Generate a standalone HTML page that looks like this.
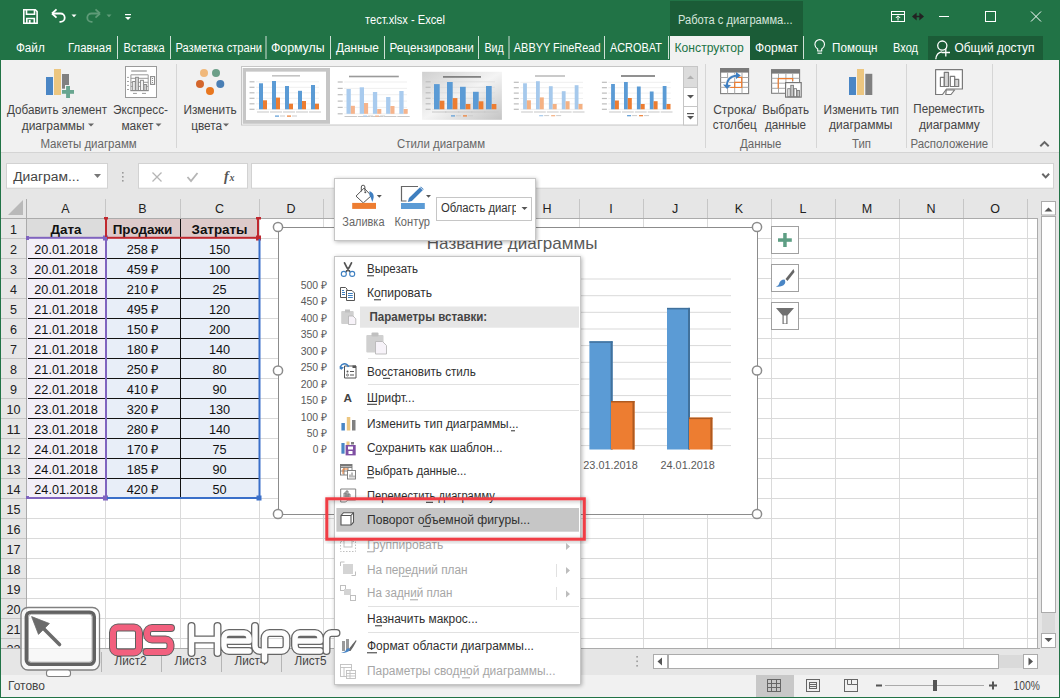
<!DOCTYPE html><html><head><meta charset="utf-8"><style>html,body{margin:0;padding:0;width:1060px;height:698px;overflow:hidden;background:#217346}svg{display:block;font-family:"Liberation Sans",sans-serif}</style></head><body>
<svg width="1060" height="698" viewBox="0 0 1060 698">
<rect x="0" y="0" width="1060" height="698" fill="#217346" />
<rect x="670" y="1" width="133" height="59" fill="#1b5c37" />
<rect x="928" y="36" width="115" height="24" fill="#1b5c37" />
<g fill="none" stroke="#fff" stroke-width="1.6"><path d="M23.8 9.8 h11.5 l1.8 1.8 v11.6 h-13.3 z"/><path d="M26.5 10 v4.2 h8 v-4.2"/><path d="M26.8 23 v-4.5 h7.5 v4.5"/></g>
<rect x="28.8" y="20" width="1.8" height="3" fill="#fff" />
<path d="M53 13.5 h7.5 a4.2 4.2 0 0 1 0 8.4 h-1" fill="none" stroke="#fff" stroke-width="1.8"/><path d="M52 13.5 l4.5 -4.2 M52 13.5 l4.5 4.2" stroke="#fff" stroke-width="1.8" fill="none"/>
<path d="M71.5 14.5 h5 l-2.5 2.8 z" fill="#fff"/>
<path d="M99 13.5 h-7.5 a4.2 4.2 0 0 0 0 8.4 h1" fill="none" stroke="#5f9b78" stroke-width="1.8"/><path d="M100 13.5 l-4.5 -4.2 M100 13.5 l-4.5 4.2" stroke="#5f9b78" stroke-width="1.8" fill="none"/>
<path d="M106.5 14.5 h5 l-2.5 2.8 z" fill="#5f9b78"/>
<rect x="125" y="14" width="6" height="1.2" fill="#fff" />
<path d="M125 17 h6 l-3 3 z" fill="#fff"/>
<text x="365" y="24" font-size="12" fill="#fff" textLength="80" lengthAdjust="spacingAndGlyphs" >тест.xlsx - Excel</text>
<text x="678" y="24" font-size="12" fill="#d6e6dc" textLength="114.5" lengthAdjust="spacingAndGlyphs" >Работа с диаграмма...</text>
<g fill="none" stroke="#fff" stroke-width="1"><rect x="891.5" y="11.5" width="13" height="10"/><line x1="891.5" y1="14.5" x2="904.5" y2="14.5"/><path d="M898 20.5 v-4.5 M895.8 18 l2.2 -2.2 l2.2 2.2"/><line x1="939" y1="16.5" x2="949" y2="16.5"/><rect x="985.5" y="11.5" width="10" height="10"/><path d="M1031 11.5 l10 10 M1041 11.5 l-10 10"/></g>
<path d="M913 16.5 h10 M913 16.5 l3 -2.5 v5 z M923 16.5 l-3 -2.5 v5 z" stroke="#222" stroke-width="1.3" fill="#222"/>
<text x="16" y="52.3" font-size="12" fill="#fff" textLength="28.7" lengthAdjust="spacingAndGlyphs" >Файл</text>
<text x="68" y="52.3" font-size="12" fill="#fff" textLength="43.3" lengthAdjust="spacingAndGlyphs" >Главная</text>
<text x="123.6" y="52.3" font-size="12" fill="#fff" textLength="41.1" lengthAdjust="spacingAndGlyphs" >Вставка</text>
<text x="175.5" y="52.3" font-size="12" fill="#fff" textLength="86.5" lengthAdjust="spacingAndGlyphs" >Разметка страни</text>
<text x="271" y="52.3" font-size="12" fill="#fff" textLength="53.5" lengthAdjust="spacingAndGlyphs" >Формулы</text>
<text x="336" y="52.3" font-size="12" fill="#fff" textLength="42.8" lengthAdjust="spacingAndGlyphs" >Данные</text>
<text x="389.5" y="52.3" font-size="12" fill="#fff" textLength="84.3" lengthAdjust="spacingAndGlyphs" >Рецензировани</text>
<text x="484.5" y="52.3" font-size="12" fill="#fff" textLength="19.3" lengthAdjust="spacingAndGlyphs" >Вид</text>
<text x="513.8" y="52.3" font-size="12" fill="#fff" textLength="86.7" lengthAdjust="spacingAndGlyphs" >ABBYY FineRead</text>
<text x="610" y="52.3" font-size="12" fill="#fff" textLength="51.8" lengthAdjust="spacingAndGlyphs" >ACROBAT</text>
<line x1="117.5" y1="36" x2="117.5" y2="59" stroke="#cfe0d5" stroke-width="1" />
<line x1="170.5" y1="36" x2="170.5" y2="59" stroke="#cfe0d5" stroke-width="1" />
<line x1="266" y1="36" x2="266" y2="59" stroke="#cfe0d5" stroke-width="1" />
<line x1="330.5" y1="36" x2="330.5" y2="59" stroke="#cfe0d5" stroke-width="1" />
<line x1="384.5" y1="36" x2="384.5" y2="59" stroke="#cfe0d5" stroke-width="1" />
<line x1="478.5" y1="36" x2="478.5" y2="59" stroke="#cfe0d5" stroke-width="1" />
<line x1="509" y1="36" x2="509" y2="59" stroke="#cfe0d5" stroke-width="1" />
<line x1="604.5" y1="36" x2="604.5" y2="59" stroke="#cfe0d5" stroke-width="1" />
<line x1="668.5" y1="36" x2="668.5" y2="59" stroke="#cfe0d5" stroke-width="1" />
<line x1="803.5" y1="36" x2="803.5" y2="59" stroke="#cfe0d5" stroke-width="1" />
<rect x="670" y="36" width="80" height="24" fill="#f1f1f1" />
<text x="674.5" y="52" font-size="12" fill="#217346" textLength="69.3" lengthAdjust="spacingAndGlyphs" >Конструктор</text>
<text x="755" y="52" font-size="12" fill="#fff" textLength="43" lengthAdjust="spacingAndGlyphs" >Формат</text>
<g fill="none" stroke="#fff" stroke-width="1.1"><path d="M817.7 51 v-2 c-1.9-1.3-2.8-2.9-2.8-4.6 a4.8 4.8 0 0 1 9.6 0 c0 1.7-0.9 3.3-2.8 4.6 v2 z"/><line x1="817.5" y1="53.2" x2="821.9" y2="53.2"/></g>
<text x="832" y="52" font-size="12" fill="#fff" textLength="45.5" lengthAdjust="spacingAndGlyphs" >Помощн</text>
<text x="893" y="52" font-size="12" fill="#fff" textLength="25" lengthAdjust="spacingAndGlyphs" >Вход</text>
<g fill="none" stroke="#fff" stroke-width="1.3"><circle cx="942.3" cy="45.6" r="4.6"/><path d="M935.8 59.2 c0.4-4.3 2.6-7 6.2-7.4"/><path d="M941.6 52.5 h8.4 M945.8 48.3 v8.3"/></g>
<text x="954.5" y="52" font-size="12" fill="#fff" textLength="80" lengthAdjust="spacingAndGlyphs" >Общий доступ</text>
<rect x="1" y="60" width="1058" height="92" fill="#f1f1f1" />
<line x1="1" y1="152.5" x2="1059" y2="152.5" stroke="#d4d4d4" stroke-width="1" />
<line x1="176.5" y1="64" x2="176.5" y2="148" stroke="#d6d6d6" stroke-width="1" />
<line x1="705.5" y1="64" x2="705.5" y2="148" stroke="#d6d6d6" stroke-width="1" />
<line x1="816.5" y1="64" x2="816.5" y2="148" stroke="#d6d6d6" stroke-width="1" />
<line x1="906.5" y1="64" x2="906.5" y2="148" stroke="#d6d6d6" stroke-width="1" />
<line x1="992.5" y1="64" x2="992.5" y2="148" stroke="#d6d6d6" stroke-width="1" />
<rect x="46" y="77" width="7" height="18" fill="#4a86c5" />
<rect x="54" y="69" width="7" height="26" fill="#ecc680" />
<rect x="62" y="74" width="7" height="14.7" fill="#808080" />
<rect x="65" y="85" width="6.5" height="5" fill="#f1f1f1" />
<rect x="66.1" y="86" width="3.9" height="12" fill="#69a690" />
<rect x="62" y="90" width="12" height="3.8" fill="#69a690" />
<text x="7" y="113.5" font-size="12" fill="#444" textLength="100" lengthAdjust="spacingAndGlyphs" >Добавить элемент</text>
<text x="21.7" y="129.5" font-size="12" fill="#444" textLength="63" lengthAdjust="spacingAndGlyphs" >диаграммы</text>
<path d="M88 123.5 h6 l-3 3 z" fill="#666"/>
<rect x="125.5" y="66.5" width="31" height="31" fill="#fff" stroke="#9a9a9a" stroke-width="1" />
<g stroke="#8a8a8a" fill="none" stroke-width="1"><rect x="131.2" y="70.2" width="15.6" height="1.6" fill="#b0b0b0" stroke="none"/><path d="M130.9 90.5 v-15.7 h17.3 v15.7 M130.9 78.3 h17.3 M130.9 82.3 h17.3 M130.9 86.4 h17.3" stroke="#9a9a9a"/><path d="M127 77.4 h2 M127 81.5 h2 M127 85.4 h2 M127 89.5 h2" stroke="#9a9a9a" stroke-width="0.9"/><rect x="132.7" y="81.5" width="2.5" height="9" fill="#fff"/><rect x="135.6" y="77.3" width="2.8" height="13.2" fill="#d8d8d8"/><rect x="140.6" y="80.3" width="2.8" height="10.2" fill="#fff"/><rect x="143.9" y="84.5" width="2.5" height="6" fill="#d8d8d8"/><line x1="130.4" y1="90.6" x2="148.7" y2="90.6" stroke-width="1.2"/><rect x="150.6" y="76.6" width="4" height="7.8" stroke-width="1.1"/><path d="M133 93.4 h3.9 M142 93.4 h4" stroke="#9a9a9a"/></g><circle cx="152.5" cy="78.5" r="0.6" fill="#777"/><circle cx="152.5" cy="80.5" r="0.6" fill="#777"/><circle cx="152.5" cy="82.5" r="0.6" fill="#777"/>
<text x="113" y="113.5" font-size="12" fill="#444" textLength="55" lengthAdjust="spacingAndGlyphs" >Экспресс-</text>
<text x="121.4" y="129.5" font-size="12" fill="#444" textLength="32" lengthAdjust="spacingAndGlyphs" >макет</text>
<path d="M155.5 123.5 h6 l-3 3 z" fill="#666"/>
<text x="40.4" y="148.3" font-size="12" fill="#666" textLength="96.3" lengthAdjust="spacingAndGlyphs" >Макеты диаграмм</text>
<circle cx="204" cy="73" r="4" fill="#f0b87a"/>
<circle cx="216" cy="73" r="4" fill="#6c9f88"/>
<circle cx="200" cy="84" r="4" fill="#d4662c"/>
<circle cx="220.3" cy="84" r="4" fill="#4a7fb5"/>
<circle cx="210" cy="91" r="4" fill="#e8771f"/>
<text x="183.4" y="113.5" font-size="12" fill="#444" textLength="53.4" lengthAdjust="spacingAndGlyphs" >Изменить</text>
<text x="191.2" y="129.5" font-size="12" fill="#444" textLength="31" lengthAdjust="spacingAndGlyphs" >цвета</text>
<path d="M223 123.5 h6 l-3 3 z" fill="#666"/>
<rect x="241.5" y="66.5" width="456" height="58.5" fill="#fff" stroke="#c6c6c6" stroke-width="1" />
<rect x="242.7" y="68" width="87.3" height="55.8" fill="#c6c6c6" />
<rect x="246" y="71.8" width="80" height="48.2" fill="#fff" />
<rect x="246" y="71.8" width="80" height="48.2" fill="#fff" />
<line x1="256" y1="109.3" x2="319" y2="109.3" stroke="#e4e4e4" stroke-width="0.6" />
<line x1="256" y1="103.8" x2="319" y2="103.8" stroke="#e4e4e4" stroke-width="0.6" />
<line x1="256" y1="98.3" x2="319" y2="98.3" stroke="#e4e4e4" stroke-width="0.6" />
<line x1="256" y1="92.8" x2="319" y2="92.8" stroke="#e4e4e4" stroke-width="0.6" />
<line x1="256" y1="87.3" x2="319" y2="87.3" stroke="#e4e4e4" stroke-width="0.6" />
<line x1="256" y1="81.8" x2="319" y2="81.8" stroke="#e4e4e4" stroke-width="0.6" />
<rect x="249.5" y="108.7" width="5" height="1.2" fill="#bdbdbd" />
<rect x="249.5" y="103.2" width="5" height="1.2" fill="#bdbdbd" />
<rect x="249.5" y="97.7" width="5" height="1.2" fill="#bdbdbd" />
<rect x="249.5" y="92.2" width="5" height="1.2" fill="#bdbdbd" />
<rect x="249.5" y="86.7" width="5" height="1.2" fill="#bdbdbd" />
<rect x="249.5" y="81.2" width="5" height="1.2" fill="#bdbdbd" />
<rect x="259" y="83.3" width="4" height="26.0" fill="#5b9bd5" />
<rect x="263" y="100.3" width="4" height="9.0" fill="#ed7d31" />
<rect x="257" y="111.5" width="12" height="1" fill="#c8c8c8" />
<rect x="272" y="81" width="4" height="28.3" fill="#5b9bd5" />
<rect x="276" y="97.6" width="4" height="11.7" fill="#ed7d31" />
<rect x="270" y="111.5" width="12" height="1" fill="#c8c8c8" />
<rect x="285" y="86" width="4" height="23.3" fill="#5b9bd5" />
<rect x="289" y="103.7" width="4" height="5.6" fill="#ed7d31" />
<rect x="283" y="111.5" width="12" height="1" fill="#c8c8c8" />
<rect x="298" y="90.8" width="4" height="18.5" fill="#5b9bd5" />
<rect x="302" y="101" width="4" height="8.3" fill="#ed7d31" />
<rect x="296" y="111.5" width="12" height="1" fill="#c8c8c8" />
<rect x="311" y="85" width="4" height="24.3" fill="#5b9bd5" />
<rect x="315" y="103.7" width="4" height="5.6" fill="#ed7d31" />
<rect x="309" y="111.5" width="12" height="1" fill="#c8c8c8" />
<rect x="272" y="75.0" width="28" height="1.6" fill="#c4c4c4" />
<rect x="275.0" y="115.5" width="4" height="1.2" fill="#5b9bd5" />
<rect x="280.0" y="115.5" width="5" height="1" fill="#ccc" />
<rect x="287.0" y="115.5" width="4" height="1.2" fill="#ed7d31" />
<rect x="292.0" y="115.5" width="5" height="1" fill="#ccc" />
<rect x="334.2" y="72" width="79.8" height="48" fill="#fff" />
<line x1="344.2" y1="113.8" x2="407.0" y2="113.8" stroke="#e4e4e4" stroke-width="0.6" />
<line x1="344.2" y1="107.4" x2="407.0" y2="107.4" stroke="#e4e4e4" stroke-width="0.6" />
<line x1="344.2" y1="101.1" x2="407.0" y2="101.1" stroke="#e4e4e4" stroke-width="0.6" />
<line x1="344.2" y1="94.7" x2="407.0" y2="94.7" stroke="#e4e4e4" stroke-width="0.6" />
<line x1="344.2" y1="88.4" x2="407.0" y2="88.4" stroke="#e4e4e4" stroke-width="0.6" />
<line x1="344.2" y1="82.0" x2="407.0" y2="82.0" stroke="#e4e4e4" stroke-width="0.6" />
<rect x="337.7" y="113.2" width="5" height="1.2" fill="#bdbdbd" />
<rect x="337.7" y="106.80000000000001" width="5" height="1.2" fill="#bdbdbd" />
<rect x="337.7" y="100.5" width="5" height="1.2" fill="#bdbdbd" />
<rect x="337.7" y="94.10000000000001" width="5" height="1.2" fill="#bdbdbd" />
<rect x="337.7" y="87.80000000000001" width="5" height="1.2" fill="#bdbdbd" />
<rect x="337.7" y="81.4" width="5" height="1.2" fill="#bdbdbd" />
<rect x="346.5" y="89" width="4.3" height="24.8" fill="#a9cbee" />
<rect x="350.8" y="105.8" width="4.1" height="8.0" fill="#f5b48c" />
<rect x="344.5" y="116.0" width="12.399999999999999" height="1" fill="#c8c8c8" />
<rect x="359.7" y="87.3" width="4.3" height="26.5" fill="#a9cbee" />
<rect x="364.0" y="103" width="4.1" height="10.8" fill="#f5b48c" />
<rect x="357.7" y="116.0" width="12.399999999999999" height="1" fill="#c8c8c8" />
<rect x="372.9" y="92" width="4.3" height="21.8" fill="#a9cbee" />
<rect x="377.2" y="109" width="4.1" height="4.8" fill="#f5b48c" />
<rect x="370.9" y="116.0" width="12.399999999999999" height="1" fill="#c8c8c8" />
<rect x="386.1" y="97" width="4.3" height="16.8" fill="#a9cbee" />
<rect x="390.4" y="106" width="4.1" height="7.8" fill="#f5b48c" />
<rect x="384.1" y="116.0" width="12.399999999999999" height="1" fill="#c8c8c8" />
<rect x="399.3" y="91" width="4.3" height="22.8" fill="#a9cbee" />
<rect x="403.6" y="109" width="4.1" height="4.8" fill="#f5b48c" />
<rect x="397.3" y="116.0" width="12.399999999999999" height="1" fill="#c8c8c8" />
<rect x="349" y="75.7" width="49.80000000000001" height="1.6" fill="#9a9a9a" />
<rect x="363.09999999999997" y="115.5" width="4" height="1.2" fill="#a9cbee" />
<rect x="368.09999999999997" y="115.5" width="5" height="1" fill="#ccc" />
<rect x="375.09999999999997" y="115.5" width="4" height="1.2" fill="#f5b48c" />
<rect x="380.09999999999997" y="115.5" width="5" height="1" fill="#ccc" />
<defs><linearGradient id="g3" x1="0" y1="0" x2="1" y2="1"><stop offset="0" stop-color="#d0d0d0"/><stop offset="0.5" stop-color="#f4f4f4"/><stop offset="1" stop-color="#c4c4c4"/></linearGradient></defs>
<rect x="422.1" y="71.8" width="79.8" height="48" fill="url(#g3)" />
<line x1="432.1" y1="109.3" x2="494.90000000000003" y2="109.3" stroke="#d6d6d6" stroke-width="0.6" />
<line x1="432.1" y1="103.8" x2="494.90000000000003" y2="103.8" stroke="#d6d6d6" stroke-width="0.6" />
<line x1="432.1" y1="98.3" x2="494.90000000000003" y2="98.3" stroke="#d6d6d6" stroke-width="0.6" />
<line x1="432.1" y1="92.8" x2="494.90000000000003" y2="92.8" stroke="#d6d6d6" stroke-width="0.6" />
<line x1="432.1" y1="87.3" x2="494.90000000000003" y2="87.3" stroke="#d6d6d6" stroke-width="0.6" />
<line x1="432.1" y1="81.8" x2="494.90000000000003" y2="81.8" stroke="#d6d6d6" stroke-width="0.6" />
<rect x="425.6" y="108.7" width="5" height="1.2" fill="#bdbdbd" />
<rect x="425.6" y="103.2" width="5" height="1.2" fill="#bdbdbd" />
<rect x="425.6" y="97.7" width="5" height="1.2" fill="#bdbdbd" />
<rect x="425.6" y="92.2" width="5" height="1.2" fill="#bdbdbd" />
<rect x="425.6" y="86.7" width="5" height="1.2" fill="#bdbdbd" />
<rect x="425.6" y="81.2" width="5" height="1.2" fill="#bdbdbd" />
<rect x="434" y="84.1" width="5.7" height="25.2" fill="#5b9bd5" />
<rect x="439.7" y="100.7" width="4.7" height="8.6" fill="#ed7d31" />
<rect x="432" y="111.5" width="14.4" height="1" fill="#c8c8c8" />
<rect x="447" y="82" width="5.7" height="27.3" fill="#5b9bd5" />
<rect x="452.7" y="98.1" width="4.7" height="11.2" fill="#ed7d31" />
<rect x="445" y="111.5" width="14.4" height="1" fill="#c8c8c8" />
<rect x="460" y="86.8" width="5.7" height="22.5" fill="#5b9bd5" />
<rect x="465.7" y="104" width="4.7" height="5.3" fill="#ed7d31" />
<rect x="458" y="111.5" width="14.4" height="1" fill="#c8c8c8" />
<rect x="473" y="91.8" width="5.7" height="17.5" fill="#5b9bd5" />
<rect x="478.7" y="101.3" width="4.7" height="8.0" fill="#ed7d31" />
<rect x="471" y="111.5" width="14.4" height="1" fill="#c8c8c8" />
<rect x="486" y="86" width="5.7" height="23.3" fill="#5b9bd5" />
<rect x="491.7" y="104" width="4.7" height="5.3" fill="#ed7d31" />
<rect x="484" y="111.5" width="14.4" height="1" fill="#c8c8c8" />
<rect x="443" y="76.10000000000001" width="38" height="1.6" fill="#777" />
<rect x="451.0" y="115.3" width="4" height="1.2" fill="#5b9bd5" />
<rect x="456.0" y="115.3" width="5" height="1" fill="#ccc" />
<rect x="463.0" y="115.3" width="4" height="1.2" fill="#ed7d31" />
<rect x="468.0" y="115.3" width="5" height="1" fill="#ccc" />
<rect x="510.3" y="72.3" width="79.7" height="47.3" fill="#fff" />
<line x1="520.3" y1="109.3" x2="583.0" y2="109.3" stroke="#e4e4e4" stroke-width="0.6" />
<line x1="520.3" y1="103.9" x2="583.0" y2="103.9" stroke="#e4e4e4" stroke-width="0.6" />
<line x1="520.3" y1="98.5" x2="583.0" y2="98.5" stroke="#e4e4e4" stroke-width="0.6" />
<line x1="520.3" y1="93.1" x2="583.0" y2="93.1" stroke="#e4e4e4" stroke-width="0.6" />
<line x1="520.3" y1="87.7" x2="583.0" y2="87.7" stroke="#e4e4e4" stroke-width="0.6" />
<line x1="520.3" y1="82.3" x2="583.0" y2="82.3" stroke="#e4e4e4" stroke-width="0.6" />
<rect x="513.8" y="108.7" width="5" height="1.2" fill="#bdbdbd" />
<rect x="513.8" y="103.30000000000001" width="5" height="1.2" fill="#bdbdbd" />
<rect x="513.8" y="97.9" width="5" height="1.2" fill="#bdbdbd" />
<rect x="513.8" y="92.5" width="5" height="1.2" fill="#bdbdbd" />
<rect x="513.8" y="87.10000000000001" width="5" height="1.2" fill="#bdbdbd" />
<rect x="513.8" y="81.7" width="5" height="1.2" fill="#bdbdbd" />
<rect x="523.1" y="83.3" width="3.8" height="26.0" fill="#a6c9ec" />
<rect x="526.9" y="100.3" width="4" height="9.0" fill="#f4b183" />
<rect x="521.1" y="111.5" width="11.8" height="1" fill="#c8c8c8" />
<rect x="536.0" y="81.2" width="3.8" height="28.1" fill="#a6c9ec" />
<rect x="539.8" y="97.4" width="4" height="11.9" fill="#f4b183" />
<rect x="534.0" y="111.5" width="11.8" height="1" fill="#c8c8c8" />
<rect x="548.9" y="86.2" width="3.8" height="23.1" fill="#a6c9ec" />
<rect x="552.7" y="104" width="4" height="5.3" fill="#f4b183" />
<rect x="546.9" y="111.5" width="11.8" height="1" fill="#c8c8c8" />
<rect x="561.8" y="91.2" width="3.8" height="18.1" fill="#a6c9ec" />
<rect x="565.6" y="101.2" width="4" height="8.1" fill="#f4b183" />
<rect x="559.8" y="111.5" width="11.8" height="1" fill="#c8c8c8" />
<rect x="574.7" y="85.2" width="3.8" height="24.1" fill="#a6c9ec" />
<rect x="578.5" y="104" width="4" height="5.3" fill="#f4b183" />
<rect x="572.7" y="111.5" width="11.8" height="1" fill="#c8c8c8" />
<rect x="535" y="75.2" width="30" height="1.6" fill="#bdbdbd" />
<rect x="539.15" y="115.1" width="4" height="1.2" fill="#a6c9ec" />
<rect x="544.15" y="115.1" width="5" height="1" fill="#ccc" />
<rect x="551.15" y="115.1" width="4" height="1.2" fill="#f4b183" />
<rect x="556.15" y="115.1" width="5" height="1" fill="#ccc" />
<rect x="598.4" y="72.3" width="79.3" height="47.3" fill="#fff" />
<line x1="608.4" y1="109.3" x2="670.6999999999999" y2="109.3" stroke="#e4e4e4" stroke-width="0.6" />
<line x1="608.4" y1="103.9" x2="670.6999999999999" y2="103.9" stroke="#e4e4e4" stroke-width="0.6" />
<line x1="608.4" y1="98.5" x2="670.6999999999999" y2="98.5" stroke="#e4e4e4" stroke-width="0.6" />
<line x1="608.4" y1="93.1" x2="670.6999999999999" y2="93.1" stroke="#e4e4e4" stroke-width="0.6" />
<line x1="608.4" y1="87.7" x2="670.6999999999999" y2="87.7" stroke="#e4e4e4" stroke-width="0.6" />
<line x1="608.4" y1="82.3" x2="670.6999999999999" y2="82.3" stroke="#e4e4e4" stroke-width="0.6" />
<rect x="601.9" y="108.7" width="5" height="1.2" fill="#bdbdbd" />
<rect x="601.9" y="103.30000000000001" width="5" height="1.2" fill="#bdbdbd" />
<rect x="601.9" y="97.9" width="5" height="1.2" fill="#bdbdbd" />
<rect x="601.9" y="92.5" width="5" height="1.2" fill="#bdbdbd" />
<rect x="601.9" y="87.10000000000001" width="5" height="1.2" fill="#bdbdbd" />
<rect x="601.9" y="81.7" width="5" height="1.2" fill="#bdbdbd" />
<rect x="611.1" y="84" width="3.8" height="25.3" fill="#5b9bd5" />
<rect x="614.9" y="100.5" width="4" height="8.8" fill="#ed7d31" />
<rect x="609.1" y="111.5" width="11.8" height="1" fill="#c8c8c8" />
<rect x="624.0" y="82" width="3.8" height="27.3" fill="#5b9bd5" />
<rect x="627.8" y="98" width="4" height="11.3" fill="#ed7d31" />
<rect x="622.0" y="111.5" width="11.8" height="1" fill="#c8c8c8" />
<rect x="636.9" y="86.5" width="3.8" height="22.8" fill="#5b9bd5" />
<rect x="640.7" y="104" width="4" height="5.3" fill="#ed7d31" />
<rect x="634.9" y="111.5" width="11.8" height="1" fill="#c8c8c8" />
<rect x="649.8" y="91.5" width="3.8" height="17.8" fill="#5b9bd5" />
<rect x="653.6" y="101.2" width="4" height="8.1" fill="#ed7d31" />
<rect x="647.8" y="111.5" width="11.8" height="1" fill="#c8c8c8" />
<rect x="662.7" y="86" width="3.8" height="23.3" fill="#5b9bd5" />
<rect x="666.5" y="104" width="4" height="5.3" fill="#ed7d31" />
<rect x="660.7" y="111.5" width="11.8" height="1" fill="#c8c8c8" />
<rect x="621" y="75.2" width="34" height="1.6" fill="#777" />
<rect x="627.05" y="115.1" width="4" height="1.2" fill="#5b9bd5" />
<rect x="632.05" y="115.1" width="5" height="1" fill="#ccc" />
<rect x="639.05" y="115.1" width="4" height="1.2" fill="#ed7d31" />
<rect x="644.05" y="115.1" width="5" height="1" fill="#ccc" />
<rect x="683.5" y="66.5" width="14" height="21" fill="#dcdcdc" stroke="#c6c6c6" stroke-width="1" />
<rect x="683.5" y="87.5" width="14" height="19" fill="#fff" stroke="#c6c6c6" stroke-width="1" />
<rect x="683.5" y="106.5" width="14" height="18.5" fill="#fff" stroke="#c6c6c6" stroke-width="1" />
<path d="M687 79 h7 l-3.5 -3.5 z" fill="#b0b0b0"/><path d="M687 95 h7 l-3.5 3.5 z" fill="#555"/><rect x="687" y="113" width="7" height="1.2" fill="#555"/><path d="M687 116 h7 l-3.5 3.5 z" fill="#555"/>
<text x="397" y="148.3" font-size="12" fill="#666" textLength="88" lengthAdjust="spacingAndGlyphs" >Стили диаграмм</text>
<g><rect x="720.6" y="68.6" width="28" height="25" fill="#fff" stroke="#808080" stroke-width="1.1"/><rect x="720" y="68" width="29" height="4.6" fill="#7a7a7a"/><g stroke="#a8a8a8" stroke-width="1"><path d="M720.5 77.5 h28 M720.5 82.4 h28 M720.5 87.3 h28 M727.6 72.5 v21 M734.7 72.5 v21 M742 72.5 v21"/></g><path d="M730.3 87.5 h11.4 v-10.2 h-3.8 M734.7 87.5 v-5.1 h7" fill="none" stroke="#ed7d31" stroke-width="1.2"/><path d="M727 86.5 c-0.5 -6 3 -10.5 10 -11" fill="none" stroke="#f1f1f1" stroke-width="3.6"/><path d="M727 86.5 c-0.5 -6 3 -10.5 10 -11" fill="none" stroke="#3f7fc1" stroke-width="2"/><path d="M736 72 l4.8 3.5 l-4.8 3.5 z M723 84.5 l4 4.5 l4 -4 z" fill="#3f7fc1"/></g>
<text x="713.2" y="113.8" font-size="12" fill="#444" textLength="43" lengthAdjust="spacingAndGlyphs" >Строка/</text>
<text x="712.8" y="128.9" font-size="12" fill="#444" textLength="43.8" lengthAdjust="spacingAndGlyphs" >столбец</text>
<g><rect x="771.6" y="69.8" width="28" height="23.5" fill="#fff" stroke="#808080" stroke-width="1.1"/><rect x="771" y="69.2" width="29" height="4.4" fill="#7a7a7a"/><g stroke="#a8a8a8" stroke-width="1"><path d="M771.5 78.3 h28 M771.5 83.2 h28 M771.5 88.3 h28 M778.5 73.5 v20 M785.9 73.5 v20 M792.7 73.5 v20"/></g><path d="M778.2 88.5 v-9.9 h14.5 v2.5" fill="none" stroke="#ed7d31" stroke-width="1.2"/><rect x="785.6" y="82.6" width="15.6" height="14.5" fill="#fff" stroke="#777" stroke-width="1.2"/><g stroke="#777" stroke-width="0.9"><rect x="787.8" y="88.7" width="2.3" height="8" fill="#fff"/><rect x="790.8" y="85.3" width="2.6" height="11.4" fill="#ccc"/><rect x="794" y="88.7" width="2.4" height="8" fill="#fff"/><rect x="797" y="90.4" width="2.4" height="6.3" fill="#ccc"/></g></g>
<text x="762.3" y="113.8" font-size="12" fill="#444" textLength="46.7" lengthAdjust="spacingAndGlyphs" >Выбрать</text>
<text x="765" y="128.9" font-size="12" fill="#444" textLength="41" lengthAdjust="spacingAndGlyphs" >данные</text>
<text x="740" y="148.3" font-size="12" fill="#666" textLength="41.5" lengthAdjust="spacingAndGlyphs" >Данные</text>
<rect x="849" y="77" width="7" height="18" fill="#4a86c5" />
<rect x="857" y="69" width="7" height="26" fill="#ecc680" />
<rect x="865.3" y="73.8" width="7" height="21.2" fill="#808080" />
<text x="823.6" y="113.8" font-size="12" fill="#444" textLength="75.4" lengthAdjust="spacingAndGlyphs" >Изменить тип</text>
<text x="829" y="128.9" font-size="12" fill="#444" textLength="63.5" lengthAdjust="spacingAndGlyphs" >диаграммы</text>
<text x="852" y="148.3" font-size="12" fill="#666" textLength="19" lengthAdjust="spacingAndGlyphs" >Тип</text>
<g stroke="#7a7a7a" stroke-width="1.2" stroke-linejoin="round"><path d="M935.6 69.7 H962.4 V89 H946.5 L942.5 94.5 H935.6 Z" fill="#fff"/><path d="M946.2 90 H954.6 L951 94.5 H945.8 Z" fill="#fff"/><rect x="940.4" y="77.4" width="3.9" height="9.1" fill="#fff"/><rect x="944.3" y="72.3" width="4.2" height="14.2" fill="#d6d6d6"/><rect x="950.3" y="76.4" width="4.4" height="10.1" fill="#fff"/><rect x="954.7" y="79.4" width="4" height="7.1" fill="#d6d6d6"/></g>
<text x="913.3" y="112.9" font-size="12" fill="#444" textLength="71.3" lengthAdjust="spacingAndGlyphs" >Переместить</text>
<text x="918.9" y="128.5" font-size="12" fill="#444" textLength="61" lengthAdjust="spacingAndGlyphs" >диаграмму</text>
<text x="910.5" y="148.3" font-size="12" fill="#666" textLength="77.7" lengthAdjust="spacingAndGlyphs" >Расположение</text>
<path d="M1040.3 146.3 l4.2 -4.2 l4.2 4.2" fill="none" stroke="#666" stroke-width="2"/>
<rect x="1" y="153" width="1058" height="45" fill="#e6e6e6" />
<rect x="6.5" y="163.5" width="101" height="24.7" fill="#fff" stroke="#d2d2d2" stroke-width="1" />
<text x="13.2" y="180.5" font-size="12" fill="#444" textLength="66.3" lengthAdjust="spacingAndGlyphs" >Диаграм...</text>
<path d="M94 174 h7 l-3.5 4 z" fill="#777"/>
<rect x="122" y="172" width="1.6" height="1.6" fill="#9a9a9a" />
<rect x="122" y="176" width="1.6" height="1.6" fill="#9a9a9a" />
<rect x="122" y="180" width="1.6" height="1.6" fill="#9a9a9a" />
<rect x="138.5" y="163.5" width="109" height="24.7" fill="#fff" stroke="#d2d2d2" stroke-width="1" />
<path d="M152.5 172.5 l9 9 M161.5 172.5 l-9 9" stroke="#b5b5b5" stroke-width="1.3"/>
<path d="M187.5 177 l3.5 4 l6.5 -8" stroke="#b5b5b5" stroke-width="1.8" fill="none"/>
<text x="224" y="181" font-size="14" fill="#555" font-weight="700" font-style="italic" font-family="Liberation Serif">f</text>
<text x="229.5" y="181" font-size="10" fill="#555" font-weight="700" font-style="italic" font-family="Liberation Serif">x</text>
<rect x="251.5" y="163.5" width="802" height="24.7" fill="#fff" stroke="#d2d2d2" stroke-width="1" />
<path d="M1042.3 173.8 l3.4 3.6 l3.4 -3.6" stroke="#666" stroke-width="2" fill="none"/>
<rect x="1" y="198" width="1040" height="450" fill="#fff" />
<rect x="1" y="198" width="1040" height="20" fill="#e6e6e6" />
<rect x="1" y="218" width="25" height="430" fill="#e6e6e6" />
<line x1="26" y1="238.5" x2="1037" y2="238.5" stroke="#dadada" stroke-width="1" />
<text x="13.5" y="234.2" font-size="12.5" fill="#222" text-anchor="middle" textLength="7" lengthAdjust="spacingAndGlyphs" >1</text>
<line x1="1" y1="238.5" x2="26" y2="238.5" stroke="#c6c6c6" stroke-width="1" />
<line x1="26" y1="258.5" x2="1037" y2="258.5" stroke="#dadada" stroke-width="1" />
<text x="13.5" y="254.2" font-size="12.5" fill="#222" text-anchor="middle" textLength="7" lengthAdjust="spacingAndGlyphs" >2</text>
<line x1="1" y1="258.5" x2="26" y2="258.5" stroke="#c6c6c6" stroke-width="1" />
<line x1="26" y1="278.5" x2="1037" y2="278.5" stroke="#dadada" stroke-width="1" />
<text x="13.5" y="274.2" font-size="12.5" fill="#222" text-anchor="middle" textLength="7" lengthAdjust="spacingAndGlyphs" >3</text>
<line x1="1" y1="278.5" x2="26" y2="278.5" stroke="#c6c6c6" stroke-width="1" />
<line x1="26" y1="298.5" x2="1037" y2="298.5" stroke="#dadada" stroke-width="1" />
<text x="13.5" y="294.2" font-size="12.5" fill="#222" text-anchor="middle" textLength="7" lengthAdjust="spacingAndGlyphs" >4</text>
<line x1="1" y1="298.5" x2="26" y2="298.5" stroke="#c6c6c6" stroke-width="1" />
<line x1="26" y1="318.5" x2="1037" y2="318.5" stroke="#dadada" stroke-width="1" />
<text x="13.5" y="314.2" font-size="12.5" fill="#222" text-anchor="middle" textLength="7" lengthAdjust="spacingAndGlyphs" >5</text>
<line x1="1" y1="318.5" x2="26" y2="318.5" stroke="#c6c6c6" stroke-width="1" />
<line x1="26" y1="338.5" x2="1037" y2="338.5" stroke="#dadada" stroke-width="1" />
<text x="13.5" y="334.2" font-size="12.5" fill="#222" text-anchor="middle" textLength="7" lengthAdjust="spacingAndGlyphs" >6</text>
<line x1="1" y1="338.5" x2="26" y2="338.5" stroke="#c6c6c6" stroke-width="1" />
<line x1="26" y1="358.5" x2="1037" y2="358.5" stroke="#dadada" stroke-width="1" />
<text x="13.5" y="354.2" font-size="12.5" fill="#222" text-anchor="middle" textLength="7" lengthAdjust="spacingAndGlyphs" >7</text>
<line x1="1" y1="358.5" x2="26" y2="358.5" stroke="#c6c6c6" stroke-width="1" />
<line x1="26" y1="378.5" x2="1037" y2="378.5" stroke="#dadada" stroke-width="1" />
<text x="13.5" y="374.2" font-size="12.5" fill="#222" text-anchor="middle" textLength="7" lengthAdjust="spacingAndGlyphs" >8</text>
<line x1="1" y1="378.5" x2="26" y2="378.5" stroke="#c6c6c6" stroke-width="1" />
<line x1="26" y1="398.5" x2="1037" y2="398.5" stroke="#dadada" stroke-width="1" />
<text x="13.5" y="394.2" font-size="12.5" fill="#222" text-anchor="middle" textLength="7" lengthAdjust="spacingAndGlyphs" >9</text>
<line x1="1" y1="398.5" x2="26" y2="398.5" stroke="#c6c6c6" stroke-width="1" />
<line x1="26" y1="418.5" x2="1037" y2="418.5" stroke="#dadada" stroke-width="1" />
<text x="13.5" y="414.2" font-size="12.5" fill="#222" text-anchor="middle" textLength="14" lengthAdjust="spacingAndGlyphs" >10</text>
<line x1="1" y1="418.5" x2="26" y2="418.5" stroke="#c6c6c6" stroke-width="1" />
<line x1="26" y1="438.5" x2="1037" y2="438.5" stroke="#dadada" stroke-width="1" />
<text x="13.5" y="434.2" font-size="12.5" fill="#222" text-anchor="middle" textLength="14" lengthAdjust="spacingAndGlyphs" >11</text>
<line x1="1" y1="438.5" x2="26" y2="438.5" stroke="#c6c6c6" stroke-width="1" />
<line x1="26" y1="458.5" x2="1037" y2="458.5" stroke="#dadada" stroke-width="1" />
<text x="13.5" y="454.2" font-size="12.5" fill="#222" text-anchor="middle" textLength="14" lengthAdjust="spacingAndGlyphs" >12</text>
<line x1="1" y1="458.5" x2="26" y2="458.5" stroke="#c6c6c6" stroke-width="1" />
<line x1="26" y1="478.5" x2="1037" y2="478.5" stroke="#dadada" stroke-width="1" />
<text x="13.5" y="474.2" font-size="12.5" fill="#222" text-anchor="middle" textLength="14" lengthAdjust="spacingAndGlyphs" >13</text>
<line x1="1" y1="478.5" x2="26" y2="478.5" stroke="#c6c6c6" stroke-width="1" />
<line x1="26" y1="498.5" x2="1037" y2="498.5" stroke="#dadada" stroke-width="1" />
<text x="13.5" y="494.2" font-size="12.5" fill="#222" text-anchor="middle" textLength="14" lengthAdjust="spacingAndGlyphs" >14</text>
<line x1="1" y1="498.5" x2="26" y2="498.5" stroke="#c6c6c6" stroke-width="1" />
<line x1="26" y1="518.5" x2="1037" y2="518.5" stroke="#dadada" stroke-width="1" />
<text x="13.5" y="514.2" font-size="12.5" fill="#222" text-anchor="middle" textLength="14" lengthAdjust="spacingAndGlyphs" >15</text>
<line x1="1" y1="518.5" x2="26" y2="518.5" stroke="#c6c6c6" stroke-width="1" />
<line x1="26" y1="538.5" x2="1037" y2="538.5" stroke="#dadada" stroke-width="1" />
<text x="13.5" y="534.2" font-size="12.5" fill="#222" text-anchor="middle" textLength="14" lengthAdjust="spacingAndGlyphs" >16</text>
<line x1="1" y1="538.5" x2="26" y2="538.5" stroke="#c6c6c6" stroke-width="1" />
<line x1="26" y1="558.5" x2="1037" y2="558.5" stroke="#dadada" stroke-width="1" />
<text x="13.5" y="554.2" font-size="12.5" fill="#222" text-anchor="middle" textLength="14" lengthAdjust="spacingAndGlyphs" >17</text>
<line x1="1" y1="558.5" x2="26" y2="558.5" stroke="#c6c6c6" stroke-width="1" />
<line x1="26" y1="578.5" x2="1037" y2="578.5" stroke="#dadada" stroke-width="1" />
<text x="13.5" y="574.2" font-size="12.5" fill="#222" text-anchor="middle" textLength="14" lengthAdjust="spacingAndGlyphs" >18</text>
<line x1="1" y1="578.5" x2="26" y2="578.5" stroke="#c6c6c6" stroke-width="1" />
<line x1="26" y1="598.5" x2="1037" y2="598.5" stroke="#dadada" stroke-width="1" />
<text x="13.5" y="594.2" font-size="12.5" fill="#222" text-anchor="middle" textLength="14" lengthAdjust="spacingAndGlyphs" >19</text>
<line x1="1" y1="598.5" x2="26" y2="598.5" stroke="#c6c6c6" stroke-width="1" />
<line x1="26" y1="618.5" x2="1037" y2="618.5" stroke="#dadada" stroke-width="1" />
<text x="13.5" y="614.2" font-size="12.5" fill="#222" text-anchor="middle" textLength="14" lengthAdjust="spacingAndGlyphs" >20</text>
<line x1="1" y1="618.5" x2="26" y2="618.5" stroke="#c6c6c6" stroke-width="1" />
<line x1="26" y1="638.5" x2="1037" y2="638.5" stroke="#dadada" stroke-width="1" />
<text x="13.5" y="634.2" font-size="12.5" fill="#222" text-anchor="middle" textLength="14" lengthAdjust="spacingAndGlyphs" >21</text>
<line x1="1" y1="638.5" x2="26" y2="638.5" stroke="#c6c6c6" stroke-width="1" />
<line x1="26" y1="658.5" x2="1037" y2="658.5" stroke="#dadada" stroke-width="1" />
<text x="13.5" y="654.2" font-size="12.5" fill="#222" text-anchor="middle" textLength="14" lengthAdjust="spacingAndGlyphs" >22</text>
<line x1="1" y1="658.5" x2="26" y2="658.5" stroke="#c6c6c6" stroke-width="1" />
<line x1="105.5" y1="199" x2="105.5" y2="218" stroke="#c6c6c6" stroke-width="1" />
<line x1="105.5" y1="218" x2="105.5" y2="648" stroke="#dadada" stroke-width="1" />
<text x="65.5" y="213" font-size="12.5" fill="#222" text-anchor="middle" >A</text>
<line x1="180.5" y1="199" x2="180.5" y2="218" stroke="#c6c6c6" stroke-width="1" />
<line x1="180.5" y1="218" x2="180.5" y2="648" stroke="#dadada" stroke-width="1" />
<text x="142.5" y="213" font-size="12.5" fill="#222" text-anchor="middle" >B</text>
<line x1="259.5" y1="199" x2="259.5" y2="218" stroke="#c6c6c6" stroke-width="1" />
<line x1="259.5" y1="218" x2="259.5" y2="648" stroke="#dadada" stroke-width="1" />
<text x="219.5" y="213" font-size="12.5" fill="#222" text-anchor="middle" >C</text>
<line x1="323.5" y1="199" x2="323.5" y2="218" stroke="#c6c6c6" stroke-width="1" />
<line x1="323.5" y1="218" x2="323.5" y2="648" stroke="#dadada" stroke-width="1" />
<text x="291.0" y="213" font-size="12.5" fill="#222" text-anchor="middle" >D</text>
<line x1="387.5" y1="199" x2="387.5" y2="218" stroke="#c6c6c6" stroke-width="1" />
<line x1="387.5" y1="218" x2="387.5" y2="648" stroke="#dadada" stroke-width="1" />
<text x="355.0" y="213" font-size="12.5" fill="#222" text-anchor="middle" >E</text>
<line x1="451.5" y1="199" x2="451.5" y2="218" stroke="#c6c6c6" stroke-width="1" />
<line x1="451.5" y1="218" x2="451.5" y2="648" stroke="#dadada" stroke-width="1" />
<text x="419.0" y="213" font-size="12.5" fill="#222" text-anchor="middle" >F</text>
<line x1="515.5" y1="199" x2="515.5" y2="218" stroke="#c6c6c6" stroke-width="1" />
<line x1="515.5" y1="218" x2="515.5" y2="648" stroke="#dadada" stroke-width="1" />
<text x="483.0" y="213" font-size="12.5" fill="#222" text-anchor="middle" >G</text>
<line x1="579.5" y1="199" x2="579.5" y2="218" stroke="#c6c6c6" stroke-width="1" />
<line x1="579.5" y1="218" x2="579.5" y2="648" stroke="#dadada" stroke-width="1" />
<text x="547.0" y="213" font-size="12.5" fill="#222" text-anchor="middle" >H</text>
<line x1="643.5" y1="199" x2="643.5" y2="218" stroke="#c6c6c6" stroke-width="1" />
<line x1="643.5" y1="218" x2="643.5" y2="648" stroke="#dadada" stroke-width="1" />
<text x="611.0" y="213" font-size="12.5" fill="#222" text-anchor="middle" >I</text>
<line x1="707.5" y1="199" x2="707.5" y2="218" stroke="#c6c6c6" stroke-width="1" />
<line x1="707.5" y1="218" x2="707.5" y2="648" stroke="#dadada" stroke-width="1" />
<text x="675.0" y="213" font-size="12.5" fill="#222" text-anchor="middle" >J</text>
<line x1="771.5" y1="199" x2="771.5" y2="218" stroke="#c6c6c6" stroke-width="1" />
<line x1="771.5" y1="218" x2="771.5" y2="648" stroke="#dadada" stroke-width="1" />
<text x="739.0" y="213" font-size="12.5" fill="#222" text-anchor="middle" >K</text>
<line x1="835.5" y1="199" x2="835.5" y2="218" stroke="#c6c6c6" stroke-width="1" />
<line x1="835.5" y1="218" x2="835.5" y2="648" stroke="#dadada" stroke-width="1" />
<text x="803.0" y="213" font-size="12.5" fill="#222" text-anchor="middle" >L</text>
<line x1="899.5" y1="199" x2="899.5" y2="218" stroke="#c6c6c6" stroke-width="1" />
<line x1="899.5" y1="218" x2="899.5" y2="648" stroke="#dadada" stroke-width="1" />
<text x="867.0" y="213" font-size="12.5" fill="#222" text-anchor="middle" >M</text>
<line x1="963.5" y1="199" x2="963.5" y2="218" stroke="#c6c6c6" stroke-width="1" />
<line x1="963.5" y1="218" x2="963.5" y2="648" stroke="#dadada" stroke-width="1" />
<text x="931.0" y="213" font-size="12.5" fill="#222" text-anchor="middle" >N</text>
<line x1="1027.5" y1="199" x2="1027.5" y2="218" stroke="#c6c6c6" stroke-width="1" />
<line x1="1027.5" y1="218" x2="1027.5" y2="648" stroke="#dadada" stroke-width="1" />
<text x="995.0" y="213" font-size="12.5" fill="#222" text-anchor="middle" >O</text>
<line x1="1091.5" y1="199" x2="1091.5" y2="218" stroke="#c6c6c6" stroke-width="1" />
<line x1="1091.5" y1="218" x2="1091.5" y2="648" stroke="#dadada" stroke-width="1" />
<line x1="1" y1="218.5" x2="1037" y2="218.5" stroke="#ababab" stroke-width="1" />
<line x1="26.5" y1="199" x2="26.5" y2="648" stroke="#ababab" stroke-width="1" />
<path d="M8 215 l15 -15 v15 z" fill="#b9b9b9"/>
<line x1="1037.5" y1="218" x2="1037.5" y2="648" stroke="#ababab" stroke-width="1" />
<rect x="27" y="219" width="78" height="19" fill="#dcdcdc" />
<rect x="105" y="219" width="154" height="19" fill="#ddcaca" />
<rect x="27" y="238" width="78" height="260" fill="#f2eff8" />
<rect x="105" y="238" width="154" height="260" fill="#e8eef8" />
<line x1="28" y1="258.5" x2="259" y2="258.5" stroke="#111" stroke-width="1" />
<line x1="28" y1="278.5" x2="259" y2="278.5" stroke="#111" stroke-width="1" />
<line x1="28" y1="298.5" x2="259" y2="298.5" stroke="#111" stroke-width="1" />
<line x1="28" y1="318.5" x2="259" y2="318.5" stroke="#111" stroke-width="1" />
<line x1="28" y1="338.5" x2="259" y2="338.5" stroke="#111" stroke-width="1" />
<line x1="28" y1="358.5" x2="259" y2="358.5" stroke="#111" stroke-width="1" />
<line x1="28" y1="378.5" x2="259" y2="378.5" stroke="#111" stroke-width="1" />
<line x1="28" y1="398.5" x2="259" y2="398.5" stroke="#111" stroke-width="1" />
<line x1="28" y1="418.5" x2="259" y2="418.5" stroke="#111" stroke-width="1" />
<line x1="28" y1="438.5" x2="259" y2="438.5" stroke="#111" stroke-width="1" />
<line x1="28" y1="458.5" x2="259" y2="458.5" stroke="#111" stroke-width="1" />
<line x1="28" y1="478.5" x2="259" y2="478.5" stroke="#111" stroke-width="1" />
<line x1="180.5" y1="219" x2="180.5" y2="498" stroke="#111" stroke-width="1" />
<text x="66" y="234" font-size="13.4" fill="#111" font-weight="700" text-anchor="middle" textLength="31" lengthAdjust="spacingAndGlyphs" >Дата</text>
<text x="142.5" y="234" font-size="13.4" fill="#111" font-weight="700" text-anchor="middle" textLength="59.6" lengthAdjust="spacingAndGlyphs" >Продажи</text>
<text x="219.5" y="234" font-size="13.4" fill="#111" font-weight="700" text-anchor="middle" textLength="56" lengthAdjust="spacingAndGlyphs" >Затраты</text>
<text x="66" y="254" font-size="12.7" fill="#111" text-anchor="middle" textLength="63.4" lengthAdjust="spacingAndGlyphs" >20.01.2018</text>
<text x="142.5" y="254" font-size="12.7" fill="#111" text-anchor="middle" >258 ₽</text>
<text x="219.5" y="254" font-size="12.7" fill="#111" text-anchor="middle" >150</text>
<text x="66" y="274" font-size="12.7" fill="#111" text-anchor="middle" textLength="63.4" lengthAdjust="spacingAndGlyphs" >20.01.2018</text>
<text x="142.5" y="274" font-size="12.7" fill="#111" text-anchor="middle" >459 ₽</text>
<text x="219.5" y="274" font-size="12.7" fill="#111" text-anchor="middle" >100</text>
<text x="66" y="294" font-size="12.7" fill="#111" text-anchor="middle" textLength="63.4" lengthAdjust="spacingAndGlyphs" >20.01.2018</text>
<text x="142.5" y="294" font-size="12.7" fill="#111" text-anchor="middle" >210 ₽</text>
<text x="219.5" y="294" font-size="12.7" fill="#111" text-anchor="middle" >25</text>
<text x="66" y="314" font-size="12.7" fill="#111" text-anchor="middle" textLength="63.4" lengthAdjust="spacingAndGlyphs" >21.01.2018</text>
<text x="142.5" y="314" font-size="12.7" fill="#111" text-anchor="middle" >495 ₽</text>
<text x="219.5" y="314" font-size="12.7" fill="#111" text-anchor="middle" >120</text>
<text x="66" y="334" font-size="12.7" fill="#111" text-anchor="middle" textLength="63.4" lengthAdjust="spacingAndGlyphs" >21.01.2018</text>
<text x="142.5" y="334" font-size="12.7" fill="#111" text-anchor="middle" >150 ₽</text>
<text x="219.5" y="334" font-size="12.7" fill="#111" text-anchor="middle" >200</text>
<text x="66" y="354" font-size="12.7" fill="#111" text-anchor="middle" textLength="63.4" lengthAdjust="spacingAndGlyphs" >21.01.2018</text>
<text x="142.5" y="354" font-size="12.7" fill="#111" text-anchor="middle" >180 ₽</text>
<text x="219.5" y="354" font-size="12.7" fill="#111" text-anchor="middle" >140</text>
<text x="66" y="374" font-size="12.7" fill="#111" text-anchor="middle" textLength="63.4" lengthAdjust="spacingAndGlyphs" >21.01.2018</text>
<text x="142.5" y="374" font-size="12.7" fill="#111" text-anchor="middle" >250 ₽</text>
<text x="219.5" y="374" font-size="12.7" fill="#111" text-anchor="middle" >80</text>
<text x="66" y="394" font-size="12.7" fill="#111" text-anchor="middle" textLength="63.4" lengthAdjust="spacingAndGlyphs" >22.01.2018</text>
<text x="142.5" y="394" font-size="12.7" fill="#111" text-anchor="middle" >410 ₽</text>
<text x="219.5" y="394" font-size="12.7" fill="#111" text-anchor="middle" >90</text>
<text x="66" y="414" font-size="12.7" fill="#111" text-anchor="middle" textLength="63.4" lengthAdjust="spacingAndGlyphs" >23.01.2018</text>
<text x="142.5" y="414" font-size="12.7" fill="#111" text-anchor="middle" >320 ₽</text>
<text x="219.5" y="414" font-size="12.7" fill="#111" text-anchor="middle" >130</text>
<text x="66" y="434" font-size="12.7" fill="#111" text-anchor="middle" textLength="63.4" lengthAdjust="spacingAndGlyphs" >23.01.2018</text>
<text x="142.5" y="434" font-size="12.7" fill="#111" text-anchor="middle" >280 ₽</text>
<text x="219.5" y="434" font-size="12.7" fill="#111" text-anchor="middle" >140</text>
<text x="66" y="454" font-size="12.7" fill="#111" text-anchor="middle" textLength="63.4" lengthAdjust="spacingAndGlyphs" >24.01.2018</text>
<text x="142.5" y="454" font-size="12.7" fill="#111" text-anchor="middle" >170 ₽</text>
<text x="219.5" y="454" font-size="12.7" fill="#111" text-anchor="middle" >75</text>
<text x="66" y="474" font-size="12.7" fill="#111" text-anchor="middle" textLength="63.4" lengthAdjust="spacingAndGlyphs" >24.01.2018</text>
<text x="142.5" y="474" font-size="12.7" fill="#111" text-anchor="middle" >185 ₽</text>
<text x="219.5" y="474" font-size="12.7" fill="#111" text-anchor="middle" >90</text>
<text x="66" y="494" font-size="12.7" fill="#111" text-anchor="middle" textLength="63.4" lengthAdjust="spacingAndGlyphs" >24.01.2018</text>
<text x="142.5" y="494" font-size="12.7" fill="#111" text-anchor="middle" >420 ₽</text>
<text x="219.5" y="494" font-size="12.7" fill="#111" text-anchor="middle" >50</text>
<rect x="28" y="236.8" width="77" height="2" fill="#8064bf" />
<rect x="105" y="237" width="2" height="261" fill="#8064bf" />
<rect x="28" y="497" width="78" height="2" fill="#8064bf" />
<rect x="26" y="236" width="3" height="4" fill="#8064bf" />
<rect x="103" y="235.5" width="5" height="5" fill="#8064bf" />
<rect x="103" y="495.5" width="5" height="5" fill="#8064bf" />
<rect x="26" y="496" width="3" height="3" fill="#8064bf" />
<rect x="105" y="219" width="2" height="18" fill="#c0282f" />
<rect x="107" y="236.8" width="152" height="2" fill="#c0282f" />
<rect x="257" y="219" width="2" height="18" fill="#c0282f" />
<rect x="104" y="217" width="4" height="2.5" fill="#c0282f" />
<rect x="256" y="217" width="5" height="2.5" fill="#c0282f" />
<rect x="256" y="235.5" width="5" height="5" fill="#c0282f" />
<rect x="258.5" y="239" width="2" height="258" fill="#3a6fc9" />
<rect x="107" y="497" width="152" height="2" fill="#3a6fc9" />
<rect x="256.5" y="495.5" width="5" height="5" fill="#3a6fc9" />
<rect x="1" y="648" width="1058" height="27" fill="#e6e6e6" />
<line x1="1" y1="648.5" x2="1040" y2="648.5" stroke="#ababab" stroke-width="1" />
<line x1="101.5" y1="652" x2="101.5" y2="672" stroke="#b5b5b5" stroke-width="1" />
<line x1="161.5" y1="652" x2="161.5" y2="672" stroke="#b5b5b5" stroke-width="1" />
<line x1="221.5" y1="652" x2="221.5" y2="672" stroke="#b5b5b5" stroke-width="1" />
<line x1="281.5" y1="652" x2="281.5" y2="672" stroke="#b5b5b5" stroke-width="1" />
<text x="130.6" y="665" font-size="12" fill="#444" text-anchor="middle" textLength="32" lengthAdjust="spacingAndGlyphs" >Лист2</text>
<text x="190.5" y="665" font-size="12" fill="#444" text-anchor="middle" textLength="32" lengthAdjust="spacingAndGlyphs" >Лист3</text>
<text x="250.5" y="665" font-size="12" fill="#444" text-anchor="middle" textLength="32" lengthAdjust="spacingAndGlyphs" >Лист4</text>
<text x="310.5" y="665" font-size="12" fill="#444" text-anchor="middle" textLength="32" lengthAdjust="spacingAndGlyphs" >Лист5</text>
<rect x="636.3" y="656" width="1.6" height="1.6" fill="#9a9a9a" />
<rect x="636.3" y="660.5" width="1.6" height="1.6" fill="#9a9a9a" />
<rect x="636.3" y="665" width="1.6" height="1.6" fill="#9a9a9a" />
<rect x="653.5" y="654.5" width="14" height="14" fill="#fff" stroke="#ababab" stroke-width="1" />
<path d="M657.5 661.5 l4.5 -4 v8 z" fill="#555"/>
<rect x="668.5" y="654.5" width="330" height="14" fill="#fff" stroke="#ababab" stroke-width="1" />
<rect x="999" y="655" width="24" height="13" fill="#dadada" />
<rect x="1023.5" y="654.5" width="14" height="14" fill="#fff" stroke="#ababab" stroke-width="1" />
<path d="M1033 661.5 l-4.5 -4 v8 z" fill="#555"/>
<rect x="1038" y="198" width="21" height="450" fill="#e6e6e6" />
<rect x="1041.5" y="201.5" width="14" height="13.5" fill="#fff" stroke="#ababab" stroke-width="1" />
<path d="M1044.5 211.5 h8 l-4 -4 z" fill="#555"/>
<rect x="1041.5" y="216.5" width="14" height="396" fill="#fff" stroke="#ababab" stroke-width="1" />
<rect x="1042" y="613" width="13" height="20" fill="#dadada" />
<rect x="1041.5" y="633.5" width="14" height="14" fill="#fff" stroke="#ababab" stroke-width="1" />
<path d="M1044.5 638 h8 l-4 4 z" fill="#555"/>
<rect x="1" y="675" width="1058" height="22" fill="#f1f1f1" />
<text x="8" y="690" font-size="12" fill="#444" textLength="37" lengthAdjust="spacingAndGlyphs" >Готово</text>
<rect x="756" y="675" width="38" height="22" fill="#c8c8c8" />
<g fill="none" stroke="#666" stroke-width="1"><rect x="767.5" y="679.5" width="13" height="12"/><line x1="767.5" y1="683.5" x2="780.5" y2="683.5"/><line x1="767.5" y1="687.5" x2="780.5" y2="687.5"/><line x1="771.5" y1="679.5" x2="771.5" y2="691.5"/><line x1="776.5" y1="679.5" x2="776.5" y2="691.5"/><rect x="806.5" y="679.5" width="13" height="12"/><rect x="809.5" y="682.5" width="7" height="6"/><line x1="810" y1="684.5" x2="816" y2="684.5"/><line x1="810" y1="686.5" x2="816" y2="686.5"/><rect x="844.5" y="679.5" width="13" height="12"/><path d="M847.5 679.5 v5 h4 v-5 M851.5 684.5 h6"/></g>
<rect x="876" y="684.5" width="6" height="2" fill="#555" />
<line x1="885" y1="685.5" x2="984" y2="685.5" stroke="#aaa" stroke-width="1" />
<rect x="933" y="680" width="4" height="11" fill="#555" />
<rect x="989" y="684.5" width="8" height="2" fill="#555" />
<rect x="992" y="681.5" width="2" height="8" fill="#555" />
<text x="1013.5" y="690" font-size="12" fill="#444" textLength="26.3" lengthAdjust="spacingAndGlyphs" >100%</text>
<defs><filter id="sh" x="-10%" y="-10%" width="120%" height="120%"><feGaussianBlur in="SourceAlpha" stdDeviation="2"/><feOffset dx="1" dy="1"/><feComponentTransfer><feFuncA type="linear" slope="0.3"/></feComponentTransfer><feMerge><feMergeNode/><feMergeNode in="SourceGraphic"/></feMerge></filter></defs>
<rect x="278.5" y="227.5" width="479" height="287" fill="#fff" stroke="#8c8c8c" stroke-width="1" />
<line x1="335" y1="445.6" x2="731" y2="445.6" stroke="#d9d9d9" stroke-width="1" />
<line x1="335" y1="428.9" x2="731" y2="428.9" stroke="#d9d9d9" stroke-width="1" />
<line x1="335" y1="412.3" x2="731" y2="412.3" stroke="#d9d9d9" stroke-width="1" />
<line x1="335" y1="395.6" x2="731" y2="395.6" stroke="#d9d9d9" stroke-width="1" />
<line x1="335" y1="379.0" x2="731" y2="379.0" stroke="#d9d9d9" stroke-width="1" />
<line x1="335" y1="362.3" x2="731" y2="362.3" stroke="#d9d9d9" stroke-width="1" />
<line x1="335" y1="345.6" x2="731" y2="345.6" stroke="#d9d9d9" stroke-width="1" />
<line x1="335" y1="329.0" x2="731" y2="329.0" stroke="#d9d9d9" stroke-width="1" />
<line x1="335" y1="312.3" x2="731" y2="312.3" stroke="#d9d9d9" stroke-width="1" />
<line x1="335" y1="295.7" x2="731" y2="295.7" stroke="#d9d9d9" stroke-width="1" />
<line x1="335" y1="279.0" x2="731" y2="279.0" stroke="#d9d9d9" stroke-width="1" />
<text x="326.7" y="453.4" font-size="11" fill="#595959" text-anchor="end" textLength="14" lengthAdjust="spacingAndGlyphs" >0 ₽</text>
<text x="326.7" y="436.9" font-size="11" fill="#595959" text-anchor="end" textLength="20" lengthAdjust="spacingAndGlyphs" >50 ₽</text>
<text x="326.7" y="420.5" font-size="11" fill="#595959" text-anchor="end" textLength="26" lengthAdjust="spacingAndGlyphs" >100 ₽</text>
<text x="326.7" y="404.0" font-size="11" fill="#595959" text-anchor="end" textLength="26" lengthAdjust="spacingAndGlyphs" >150 ₽</text>
<text x="326.7" y="387.6" font-size="11" fill="#595959" text-anchor="end" textLength="26" lengthAdjust="spacingAndGlyphs" >200 ₽</text>
<text x="326.7" y="371.1" font-size="11" fill="#595959" text-anchor="end" textLength="26" lengthAdjust="spacingAndGlyphs" >250 ₽</text>
<text x="326.7" y="354.6" font-size="11" fill="#595959" text-anchor="end" textLength="26" lengthAdjust="spacingAndGlyphs" >300 ₽</text>
<text x="326.7" y="338.2" font-size="11" fill="#595959" text-anchor="end" textLength="26" lengthAdjust="spacingAndGlyphs" >350 ₽</text>
<text x="326.7" y="321.7" font-size="11" fill="#595959" text-anchor="end" textLength="26" lengthAdjust="spacingAndGlyphs" >400 ₽</text>
<text x="326.7" y="305.3" font-size="11" fill="#595959" text-anchor="end" textLength="26" lengthAdjust="spacingAndGlyphs" >450 ₽</text>
<text x="326.7" y="288.8" font-size="11" fill="#595959" text-anchor="end" textLength="26" lengthAdjust="spacingAndGlyphs" >500 ₽</text>
<text x="426.8" y="249.2" font-size="17" fill="#595959" textLength="170.7" lengthAdjust="spacingAndGlyphs" >Название диаграммы</text>
<rect x="589.4" y="341.3" width="23.200000000000045" height="108.19999999999999" fill="#5b9bd5" />
<rect x="610.6" y="341.3" width="2" height="108.19999999999999" fill="#41719c" />
<rect x="589.4" y="341.3" width="23.200000000000045" height="1.5" fill="#41719c" />
<rect x="611" y="401" width="23.5" height="48.5" fill="#ed7d31" />
<rect x="632.5" y="401" width="2" height="48.5" fill="#ae5a21" />
<rect x="611" y="401" width="23.5" height="1.5" fill="#ae5a21" />
<rect x="667" y="307.9" width="23" height="141.60000000000002" fill="#5b9bd5" />
<rect x="688" y="307.9" width="2" height="141.60000000000002" fill="#41719c" />
<rect x="667" y="307.9" width="23" height="1.5" fill="#41719c" />
<rect x="689" y="417.6" width="23.399999999999977" height="31.899999999999977" fill="#ed7d31" />
<rect x="710.4" y="417.6" width="2" height="31.899999999999977" fill="#ae5a21" />
<rect x="689" y="417.6" width="23.399999999999977" height="1.5" fill="#ae5a21" />
<text x="610.5" y="469" font-size="10.9" fill="#595959" text-anchor="middle" textLength="54.4" lengthAdjust="spacingAndGlyphs" >23.01.2018</text>
<text x="687.7" y="469" font-size="10.9" fill="#595959" text-anchor="middle" textLength="54.4" lengthAdjust="spacingAndGlyphs" >24.01.2018</text>
<circle cx="278" cy="227" r="4.6" fill="#fff" stroke="#8c8c8c" stroke-width="1.5"/>
<circle cx="757" cy="227" r="4.6" fill="#fff" stroke="#8c8c8c" stroke-width="1.5"/>
<circle cx="278" cy="514" r="4.6" fill="#fff" stroke="#8c8c8c" stroke-width="1.5"/>
<circle cx="757" cy="514" r="4.6" fill="#fff" stroke="#8c8c8c" stroke-width="1.5"/>
<circle cx="278" cy="370.5" r="4.6" fill="#fff" stroke="#8c8c8c" stroke-width="1.5"/>
<circle cx="757" cy="370.5" r="4.6" fill="#fff" stroke="#8c8c8c" stroke-width="1.5"/>
<rect x="771.5" y="226.5" width="27" height="27" fill="#fff" stroke="#a0a0a0" stroke-width="1" />
<rect x="771.5" y="264.5" width="27" height="27" fill="#fff" stroke="#a0a0a0" stroke-width="1" />
<rect x="771.5" y="302.5" width="27" height="27" fill="#fff" stroke="#a0a0a0" stroke-width="1" />
<rect x="783.2" y="233" width="3.5" height="14" fill="#5e9e84" />
<rect x="778" y="238.3" width="13.8" height="3.5" fill="#5e9e84" />
<path d="M793.5 269 l-8 10 l2 2 l7 -9 z" fill="#666"/><path d="M784.5 279.5 c-3 0 -5 2 -5.5 4.5 c-0.5 1.5 -2 2 -3 2.5 c3 0.5 7 0 8.8 -2.8 c0.8 -1.2 0.6 -2.8 -0.3 -4.2 z" fill="#4a86c5"/>
<path d="M776 308 h18 l-6.5 7.5 v8.5 h-5 v-8.5 z" fill="#707070"/><rect x="783.7" y="315.5" width="2.6" height="8" fill="#fff"/>
<g filter="url(#sh)">
<rect x="334.5" y="178.5" width="201" height="62" fill="#fff" stroke="#c6c6c6" stroke-width="1" />
</g>
<path d="M356 196.1 L364.1 188.1 L371.3 195.7 L363.3 202.9 Z" fill="#fff" stroke="#555" stroke-width="1"/><path d="M361.3 191.5 v-4.5 a1.8 1.8 0 0 1 3.6 0 v4" fill="none" stroke="#555" stroke-width="1"/><circle cx="365.3" cy="192.3" r="1" fill="#555"/><path d="M369.5 191 c2.5 1 4.5 3 4.2 6 c-0.3 2 -1 4 -1.5 5 c-0.5 -2.5 -1.5 -5 -2.7 -6.5 z" fill="#3f7fc1"/>
<path d="M376.8 195 h5 l-2.5 2.8 z" fill="#555"/><path d="M426 195 h5 l-2.5 2.8 z" fill="#555"/>
<rect x="352.2" y="202.9" width="23.8" height="6" fill="#ed7d31" />
<path d="M418 186.5 h-16.5 v14.5 h5" fill="none" stroke="#666" stroke-width="1.2"/><path d="M407.8 202 l1.2 -4 l11.8 -11.6 l2.9 2.9 l-11.8 11.6 z" fill="#3f7fbf"/><path d="M420 187.2 l2.9 2.9" stroke="#fff" stroke-width="0.8"/>
<rect x="401" y="203" width="23.8" height="6" fill="#5b9bd5" />
<text x="342.3" y="225.9" font-size="12" fill="#666" textLength="42.2" lengthAdjust="spacingAndGlyphs" >Заливка</text>
<text x="394.4" y="225.9" font-size="12" fill="#666" textLength="35.6" lengthAdjust="spacingAndGlyphs" >Контур</text>
<rect x="436.5" y="197.5" width="95" height="23" fill="#fff" stroke="#c6c6c6" stroke-width="1" />
<text x="441" y="212.3" font-size="12" fill="#333" textLength="77" lengthAdjust="spacingAndGlyphs" clip-path="url(#cp1)">Область диагр</text>
<defs><clipPath id="cp1"><rect x="437" y="198" width="79" height="22"/></clipPath></defs>
<path d="M521.5 207 h6 l-3 3 z" fill="#555"/>
<g filter="url(#sh)">
<rect x="334.5" y="256.5" width="246" height="428" fill="#fff" stroke="#c6c6c6" stroke-width="1" />
</g>
<rect x="360" y="306.5" width="219" height="21.2" fill="#e6e6e6" />
<text x="369.6" y="320.8" font-size="12" fill="#444" font-weight="700" textLength="117.6" lengthAdjust="spacingAndGlyphs" >Параметры вставки:</text>
<rect x="336.4" y="508" width="242.6" height="23.7" fill="#c6c6c6" />
<text x="367" y="273.3" font-size="12" fill="#303030" textLength="51" lengthAdjust="spacingAndGlyphs" >Вырезать</text>
<text x="367" y="297.3" font-size="12" fill="#303030" textLength="65" lengthAdjust="spacingAndGlyphs" >Копировать</text>
<text x="367" y="375.8" font-size="12" fill="#303030" textLength="108.8" lengthAdjust="spacingAndGlyphs" >Восстановить стиль</text>
<text x="367" y="401.8" font-size="12" fill="#303030" textLength="47.7" lengthAdjust="spacingAndGlyphs" >Шрифт...</text>
<text x="367" y="428.3" font-size="12" fill="#303030" textLength="151.6" lengthAdjust="spacingAndGlyphs" >Изменить тип диаграммы...</text>
<text x="367" y="451.8" font-size="12" fill="#303030" textLength="135.5" lengthAdjust="spacingAndGlyphs" >Сохранить как шаблон...</text>
<text x="367" y="475.3" font-size="12" fill="#303030" textLength="99.4" lengthAdjust="spacingAndGlyphs" >Выбрать данные...</text>
<text x="367" y="499.8" font-size="12" fill="#303030" textLength="136" lengthAdjust="spacingAndGlyphs" >Переместить диаграмму...</text>
<text x="367" y="523.8" font-size="12" fill="#303030" textLength="163" lengthAdjust="spacingAndGlyphs" >Поворот объемной фигуры...</text>
<text x="367" y="549.3" font-size="12" fill="#a6a6a6" textLength="76.4" lengthAdjust="spacingAndGlyphs" >Группировать</text>
<text x="367" y="573.8" font-size="12" fill="#a6a6a6" textLength="100.6" lengthAdjust="spacingAndGlyphs" >На передний план</text>
<text x="367" y="597.3" font-size="12" fill="#a6a6a6" textLength="85.4" lengthAdjust="spacingAndGlyphs" >На задний план</text>
<text x="367" y="623.3" font-size="12" fill="#303030" textLength="110.8" lengthAdjust="spacingAndGlyphs" >Назначить макрос...</text>
<text x="367" y="650.3" font-size="12" fill="#303030" textLength="166.9" lengthAdjust="spacingAndGlyphs" >Формат области диаграммы...</text>
<text x="367" y="675.3" font-size="12" fill="#a6a6a6" textLength="188.5" lengthAdjust="spacingAndGlyphs" >Параметры сводной диаграммы...</text>
<line x1="368" y1="358.5" x2="579" y2="358.5" stroke="#e1e1e1" stroke-width="1" />
<line x1="368" y1="384.5" x2="579" y2="384.5" stroke="#e1e1e1" stroke-width="1" />
<line x1="368" y1="410.5" x2="579" y2="410.5" stroke="#e1e1e1" stroke-width="1" />
<line x1="368" y1="606.5" x2="579" y2="606.5" stroke="#e1e1e1" stroke-width="1" />
<line x1="368" y1="632.5" x2="579" y2="632.5" stroke="#e1e1e1" stroke-width="1" />
<path d="M556.5 564 v13 M556.5 587 v13" stroke="#e1e1e1"/><path d="M566 567 l4 3.5 l-4 3.5 z M566 590.5 l4 3.5 l-4 3.5 z M566 543 l4 3.5 l-4 3.5 z" fill="#bdbdbd"/>
<line x1="367" y1="275.8" x2="374" y2="275.8" stroke="#303030" stroke-width="1" />
<line x1="374" y1="299.8" x2="381" y2="299.8" stroke="#303030" stroke-width="1" />
<line x1="383" y1="378.3" x2="390" y2="378.3" stroke="#303030" stroke-width="1" />
<line x1="367" y1="404.3" x2="377" y2="404.3" stroke="#303030" stroke-width="1" />
<line x1="511" y1="430.8" x2="515" y2="430.8" stroke="#303030" stroke-width="1" />
<line x1="375" y1="454.3" x2="382" y2="454.3" stroke="#303030" stroke-width="1" />
<line x1="367" y1="477.8" x2="374" y2="477.8" stroke="#303030" stroke-width="1" />
<line x1="426" y1="502.3" x2="433" y2="502.3" stroke="#303030" stroke-width="1" />
<line x1="423" y1="526.3" x2="430" y2="526.3" stroke="#303030" stroke-width="1" />
<line x1="367" y1="551.8" x2="374" y2="551.8" stroke="#a6a6a6" stroke-width="1" />
<line x1="402" y1="576.3" x2="409" y2="576.3" stroke="#a6a6a6" stroke-width="1" />
<line x1="410" y1="599.8" x2="418" y2="599.8" stroke="#a6a6a6" stroke-width="1" />
<line x1="375" y1="625.8" x2="382" y2="625.8" stroke="#303030" stroke-width="1" />
<line x1="367" y1="652.8" x2="377" y2="652.8" stroke="#303030" stroke-width="1" />
<line x1="462" y1="677.8" x2="470" y2="677.8" stroke="#a6a6a6" stroke-width="1" />
<g fill="none" stroke-linecap="round"><path d="M344.5 262.8 Q346.5 267.5 349.6 271.4 M351.5 262.8 Q349.5 267.5 346.4 271.4" stroke="#555" stroke-width="1.7"/><circle cx="343.8" cy="273.9" r="2.5" stroke="#3d7fc1" stroke-width="1.1"/><circle cx="352.2" cy="273.9" r="2.5" stroke="#3d7fc1" stroke-width="1.1"/></g>
<g stroke="#555" stroke-width="1" fill="#fff"><path d="M340.5 287.5 h5 l1.5 1.5 v8.5 h-6.5 z"/><path d="M346.5 290.5 h5.5 l2.5 2.5 v7.5 h-8 z"/></g><g stroke="#3d7fc1" stroke-width="1"><path d="M342 290.5 h2 M342 292.5 h3 M342 294.5 h3 M348 293.5 h4.8 M348 295.5 h4.8 M348 297.5 h4.8"/></g>
<rect x="341.2" y="311" width="12.5" height="13" rx="1" fill="#d0d0d0"/><rect x="345" y="309.5" width="5" height="3" fill="#c0c0c0"/><path d="M348.5 316 h4.5 l2.8 2.8 v5.7 h-7.3 z" fill="#f7f3f9" stroke="#b8b8b8" stroke-width="0.9"/>
<rect x="366.3" y="335" width="17.2" height="17.5" rx="1" fill="#d0d0d0"/><rect x="371.5" y="332.5" width="7" height="4" rx="1" fill="#c0c0c0"/><path d="M375.5 341.5 h7 l4 4 v8.5 h-11 z" fill="#f7f3f9" stroke="#b8b8b8" stroke-width="0.9"/>
<path d="M344.5 366 h11.5 v12 h-11.5 z" fill="#fff" stroke="#555" stroke-width="1"/><path d="M340.5 369 a4 4 0 0 1 8 -2" fill="none" stroke="#3d7fc1" stroke-width="1.5"/><path d="M339.5 366 l1.5 4 l3 -2.5 z" fill="#3d7fc1"/><circle cx="347.5" cy="371.5" r="1" fill="#555"/><circle cx="347.5" cy="375" r="1" fill="none" stroke="#555" stroke-width="0.8"/><path d="M350 371.5 h4 M350 375 h4" stroke="#555"/><rect x="352.5" y="365.5" width="3.5" height="2.5" fill="#555"/>
<text x="343.5" y="401.7" font-size="10" fill="#444" font-weight="700" textLength="8.5" lengthAdjust="spacingAndGlyphs" >A</text>
<rect x="341.4" y="423" width="3.5" height="7.5" fill="#4a86c5" />
<rect x="346.8" y="417" width="3.5" height="13.5" fill="#ecc680" />
<rect x="352" y="420" width="3.5" height="10.5" fill="#808080" />
<rect x="341.4" y="443" width="3.2" height="10.7" fill="#4a86c5" />
<rect x="346.5" y="441.5" width="3" height="3.5" fill="#ecc680" />
<rect x="351" y="442" width="3" height="2.5" fill="#808080" />
<path d="M345.6 445 h10.1 v10.4 h-10.1 z" fill="#7f4fa3"/><rect x="348" y="446.5" width="5" height="3" fill="#fff"/><rect x="348.5" y="451" width="4" height="3" fill="#fff"/>
<g stroke="#777" stroke-width="0.9" fill="none"><rect x="340.5" y="464.5" width="11.5" height="10.5" fill="#fff"/><path d="M340.5 467.5 h11.5 M340.5 471 h11.5 M344 467.5 v7.5 M348 467.5 v7.5"/></g><rect x="340.5" y="464.5" width="11.5" height="2" fill="#777"/><path d="M343 474 v-5 h5" stroke="#ed7d31" fill="none"/><rect x="347.5" y="470.5" width="8" height="8.5" fill="#fff" stroke="#777" stroke-width="0.9"/><path d="M350 477.5 v-3 M352 477.5 v-5 M354 477.5 v-2" stroke="#777"/>
<path d="M340.7 489 h15 v11 h-8 l-2 2 h-5 z" fill="#fff" stroke="#777" stroke-width="0.9"/><path d="M344 497 v-4 h2 v4 M346 497 v-6 h2 v6 M348 497 v-3 h2 v3" stroke="#777" stroke-width="0.9" fill="#ccc"/>
<path d="M341 515.5 l2.5 -2.8 h10 v9.5 l-2.5 2.8 h-10 z" fill="#fff" stroke="#555" stroke-width="1.1"/><path d="M341 515.5 h10 v9.5 M351 515.5 l2.5 -2.8" fill="none" stroke="#555" stroke-width="1.1"/>
<g stroke="#bfbfbf" stroke-width="1" fill="none" stroke-dasharray="1.5 1.5"><rect x="340.5" y="541.5" width="15" height="10"/></g><rect x="344" y="540" width="8" height="7" fill="#fff" stroke="#bfbfbf"/>
<path d="M340.5 566 v-4 h4 M351.5 575.5 h4 v-4" stroke="#bfbfbf" fill="none"/><rect x="343" y="564" width="10" height="10" fill="#d4d4d4"/>
<rect x="340.5" y="585.5" width="5" height="5" fill="#fff" stroke="#bfbfbf"/><rect x="344" y="589" width="7" height="6" fill="#d4d4d4"/><rect x="350.5" y="595.5" width="5" height="5" fill="#fff" stroke="#bfbfbf"/>
<rect x="342" y="641" width="3" height="10" fill="#9a9a9a"/><rect x="346" y="639" width="3" height="12" fill="#9a9a9a"/><path d="M348 651 c2 -4 4 -6 8 -11 l0.5 1 c-2 4 -4 7 -6 10 z" fill="#666"/><path d="M341 653 c2 -1 4 -1 5 -3 c1 -2 3 -2 4 -1 c0 2 -3 4 -9 4 z" fill="#4a86c5"/>
<g stroke="#bfbfbf" stroke-width="0.9" fill="none"><rect x="340.5" y="664.5" width="11" height="12"/><path d="M340.5 667.5 h11 M344 667.5 v9"/><rect x="346.5" y="670.5" width="9" height="8" fill="#fff"/><path d="M346.5 673.5 h9 M346.5 676 h9 M350 670.5 v8"/></g>
<g filter="url(#sh)">
<rect x="326.8" y="498.8" width="257.5" height="40.4" fill="none" stroke="#f03c44" stroke-width="3" />
</g>
<g>
<rect x="21" y="607.5" width="78.5" height="62.5" rx="7" fill="#fff" fill-opacity="0.72" stroke="#808080" stroke-width="1.3"/>
<rect x="26.4" y="612.2" width="67.8" height="52" rx="4.5" fill="none" stroke="#626262" stroke-width="3.6"/>
<rect x="28.5" y="614.2" width="63.6" height="48" rx="3" fill="none" stroke="#9a9a9a" stroke-width="0.8"/>
<rect x="46.5" y="670" width="24" height="6.5" rx="2.5" fill="#fff" stroke="#808080" stroke-width="1.1"/>
<path d="M36 621 L59.5 644.5" stroke="#6b6b6b" stroke-width="3.6" stroke-linecap="round"/><path d="M31.6 616.6 L49.4 623.5 L38.5 634.4 Z" fill="#6b6b6b" stroke="#6b6b6b" stroke-width="0.8" stroke-linejoin="round"/>
<g fill="none" stroke-linejoin="round" stroke-linecap="round">
<path d="M118 627.5 h16 a5 5 0 0 1 5 5 v15 a5 5 0 0 1 -5 5 h-16 a5 5 0 0 1 -5 -5 v-15 a5 5 0 0 1 5 -5 z M171 628 h-19 a5 5 0 0 0 -5 5 v1.5 a5 5 0 0 0 5 5 h13.5 a5 5 0 0 1 5 5 v2.5 a5 5 0 0 1 -5 5 h-19" stroke="#5f5f5f" stroke-width="8"/><path d="M118 627.5 h16 a5 5 0 0 1 5 5 v15 a5 5 0 0 1 -5 5 h-16 a5 5 0 0 1 -5 -5 v-15 a5 5 0 0 1 5 -5 z M171 628 h-19 a5 5 0 0 0 -5 5 v1.5 a5 5 0 0 0 5 5 h13.5 a5 5 0 0 1 5 5 v2.5 a5 5 0 0 1 -5 5 h-19" stroke="#f2607e" stroke-width="6"/>
<path d="M191.5 626 v27 M217.5 626 v27 M191.5 639.5 h26 M249 651 h-20 a5 5 0 0 1 -5 -5 v-8 a5 5 0 0 1 5 -5 h15 a5 5 0 0 1 5 5 v3 h-25 M255 626 v20 a5 5 0 0 0 5 5 M264.5 660 v-22 a5 5 0 0 1 5 -5 h12 a5 5 0 0 1 5 5 v8 a5 5 0 0 1 -5 5 h-17 M320 651 h-20 a5 5 0 0 1 -5 -5 v-8 a5 5 0 0 1 5 -5 h15 a5 5 0 0 1 5 5 v3 h-25 M326.5 651 v-13 a5 5 0 0 1 5 -5 h5" stroke="#666" stroke-width="8"/><path d="M191.5 626 v27 M217.5 626 v27 M191.5 639.5 h26 M249 651 h-20 a5 5 0 0 1 -5 -5 v-8 a5 5 0 0 1 5 -5 h15 a5 5 0 0 1 5 5 v3 h-25 M255 626 v20 a5 5 0 0 0 5 5 M264.5 660 v-22 a5 5 0 0 1 5 -5 h12 a5 5 0 0 1 5 5 v8 a5 5 0 0 1 -5 5 h-17 M320 651 h-20 a5 5 0 0 1 -5 -5 v-8 a5 5 0 0 1 5 -5 h15 a5 5 0 0 1 5 5 v3 h-25 M326.5 651 v-13 a5 5 0 0 1 5 -5 h5" stroke="#fdfdfd" stroke-width="5.4"/>
</g></g>
<rect x="0" y="0" width="1" height="698" fill="#217346" />
<rect x="1059" y="0" width="1" height="698" fill="#217346" />
<rect x="0" y="697" width="1060" height="1" fill="#217346" />
</svg></body></html>
